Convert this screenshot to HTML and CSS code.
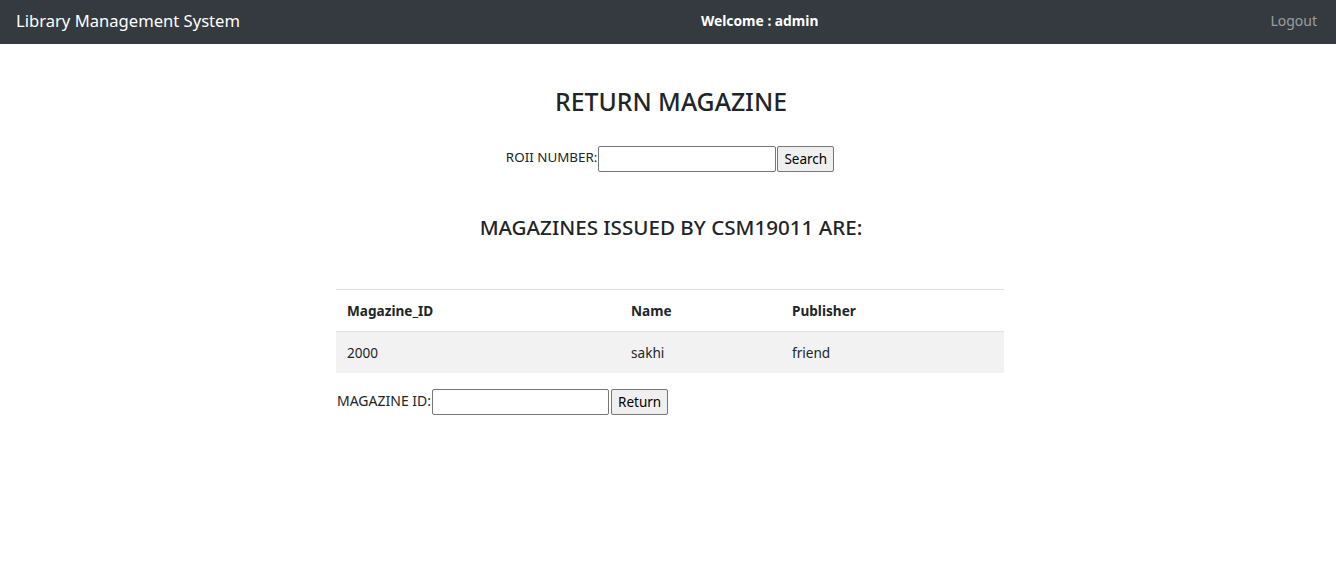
FILE: index.html
```html
<!DOCTYPE html>
<html>
<head>
<meta charset="utf-8">
<link rel="stylesheet" href="styles.css">
</head>
<body>
<nav class="navbar">
  <a class="brand">Library Management System</a>
  <span class="welcome">Welcome : admin</span>
  <a class="logout">Logout</a>
</nav>
<main class="main">
  <h2 class="title">RETURN MAGAZINE</h2>
  <form class="search-form">
    <label class="lbl">ROII NUMBER:</label><input class="inp" type="text"><button class="btn" type="button">Search</button>
  </form>
  <h3 class="subtitle">MAGAZINES ISSUED BY CSM19011 ARE:</h3>
  <div class="table-wrap">
    <table class="table">
      <thead>
        <tr><th class="c1">Magazine_ID</th><th class="c2">Name</th><th class="c3">Publisher</th></tr>
      </thead>
      <tbody>
        <tr class="striped"><td>2000</td><td>sakhi</td><td>friend</td></tr>
      </tbody>
    </table>
    <form class="return-form">
      <label class="lbl">MAGAZINE ID:</label><input class="inp" type="text"><button class="btn" type="button">Return</button>
    </form>
  </div>
</main>
</body>
</html>
```
FILE: styles.css
```css
* { box-sizing: border-box; }
html, body { margin: 0; padding: 0; }
body {
  font-family: "Noto Sans", "Open Sans", sans-serif;
  color: #212529;
  background: #fff;
}
.navbar {
  height: 44px;
  background: #343a40;
  display: flex;
  align-items: center;
  padding: 0 19px 4px 16px;
}
.brand {
  color: #fff;
  font-size: 16.6px;
  flex: none;
}
.welcome {
  color: #fff;
  font-weight: bold;
  font-size: 13.8px;
  margin-left: 461px;
}
.logout {
  color: rgba(255,255,255,.5);
  font-size: 14px;
  margin-left: auto;
}
.main {
  display: flex;
  flex-direction: column;
  align-items: center;
}
.title {
  margin: 42px 0 0 6px;
  font-size: 24.8px;
  font-weight: 500;
  line-height: 30px;
}
.search-form {
  margin-top: 30px;
  display: flex;
  align-items: center;
  margin-left: 4px;
}
.lbl { color: #212529; font-size: 13.4px; margin-top: -4px; }
.inp {
  width: 178px;
  height: 26px;
  border: 1px solid #767676;
  border-radius: 2px;
  margin: 0 1px 0 1px;
  padding: 1px 2px;
}
.btn {
  height: 26px;
  font-family: "Noto Sans", sans-serif;
  font-size: 13.5px;
  background: #efefef;
  border: 1px solid #767676;
  border-radius: 2px;
  padding: 1px 6px;
  color: #000;
}
.subtitle {
  margin: 41px 0 0 6px;
  font-size: 20.6px;
  font-weight: 500;
  line-height: 28px;
}
.table-wrap {
  width: 668px;
  margin-top: 48px;
  margin-left: 4px;
}
.table {
  width: 100%;
  border-collapse: collapse;
  font-size: 13.6px;
}
.table th, .table td {
  text-align: left;
  padding: 10px 11px;
  line-height: 21px;
  border-top: 1px solid #dee2e6;
}
.table th { font-weight: bold; }
.c1 { width: 284px; }
.c2 { width: 161px; }
.striped { background: #f2f2f2; }
.return-form {
  display: flex;
  align-items: center;
  margin-top: 16px;
  padding-left: 1px;
}
.return-form .lbl { font-size: 14px; }
.return-form .inp { width: 177px; }
.return-form .btn { margin-left: 1px; }
```
